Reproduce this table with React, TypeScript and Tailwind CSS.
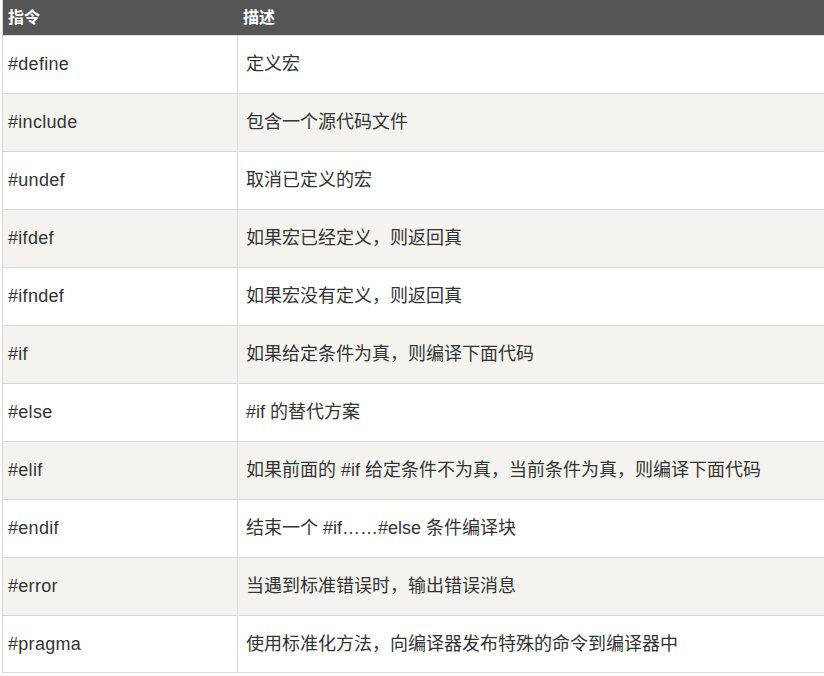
const rows: [string, string][] = [
  ["#define", "定义宏"],
  ["#include", "包含一个源代码文件"],
  ["#undef", "取消已定义的宏"],
  ["#ifdef", "如果宏已经定义，则返回真"],
  ["#ifndef", "如果宏没有定义，则返回真"],
  ["#if", "如果给定条件为真，则编译下面代码"],
  ["#else", "#if 的替代方案"],
  ["#elif", "如果前面的 #if 给定条件不为真，当前条件为真，则编译下面代码"],
  ["#endif", "结束一个 #if……#else 条件编译块"],
  ["#error", "当遇到标准错误时，输出错误消息"],
  ["#pragma", "使用标准化方法，向编译器发布特殊的命令到编译器中"],
];

const App = () => {
  return (
    <div
      className="w-[824px] h-[676px] bg-white overflow-hidden"
      style={{ fontFamily: '"Liberation Sans", "Noto Sans CJK SC", sans-serif' }}
    >
      <div className="ml-[2px] border-l border-[#d9d9d9]">
        <div className="flex h-[35px] bg-[#555555] text-white text-[16px] font-bold items-center">
          <div className="w-[235px] pl-[5px]">指令</div>
          <div className="pl-[5px]">描述</div>
        </div>
        {rows.map(([cmd, desc], i) => (
          <div
            key={cmd}
            className={`flex h-[58px] border-t border-[#d9d9d9] text-[18px] text-[#333333] ${
              i % 2 === 1 ? "bg-[#f4f3f0]" : "bg-white"
            } ${i === rows.length - 1 ? "border-b" : ""}`}
          >
            <div className="w-[235px] pl-[5px] flex items-center border-r border-[#d9d9d9] tracking-[0.3px]">
              {cmd}
            </div>
            <div className="pl-[8px] flex items-center">{desc}</div>
          </div>
        ))}
      </div>
    </div>
  );
};

export default App;
